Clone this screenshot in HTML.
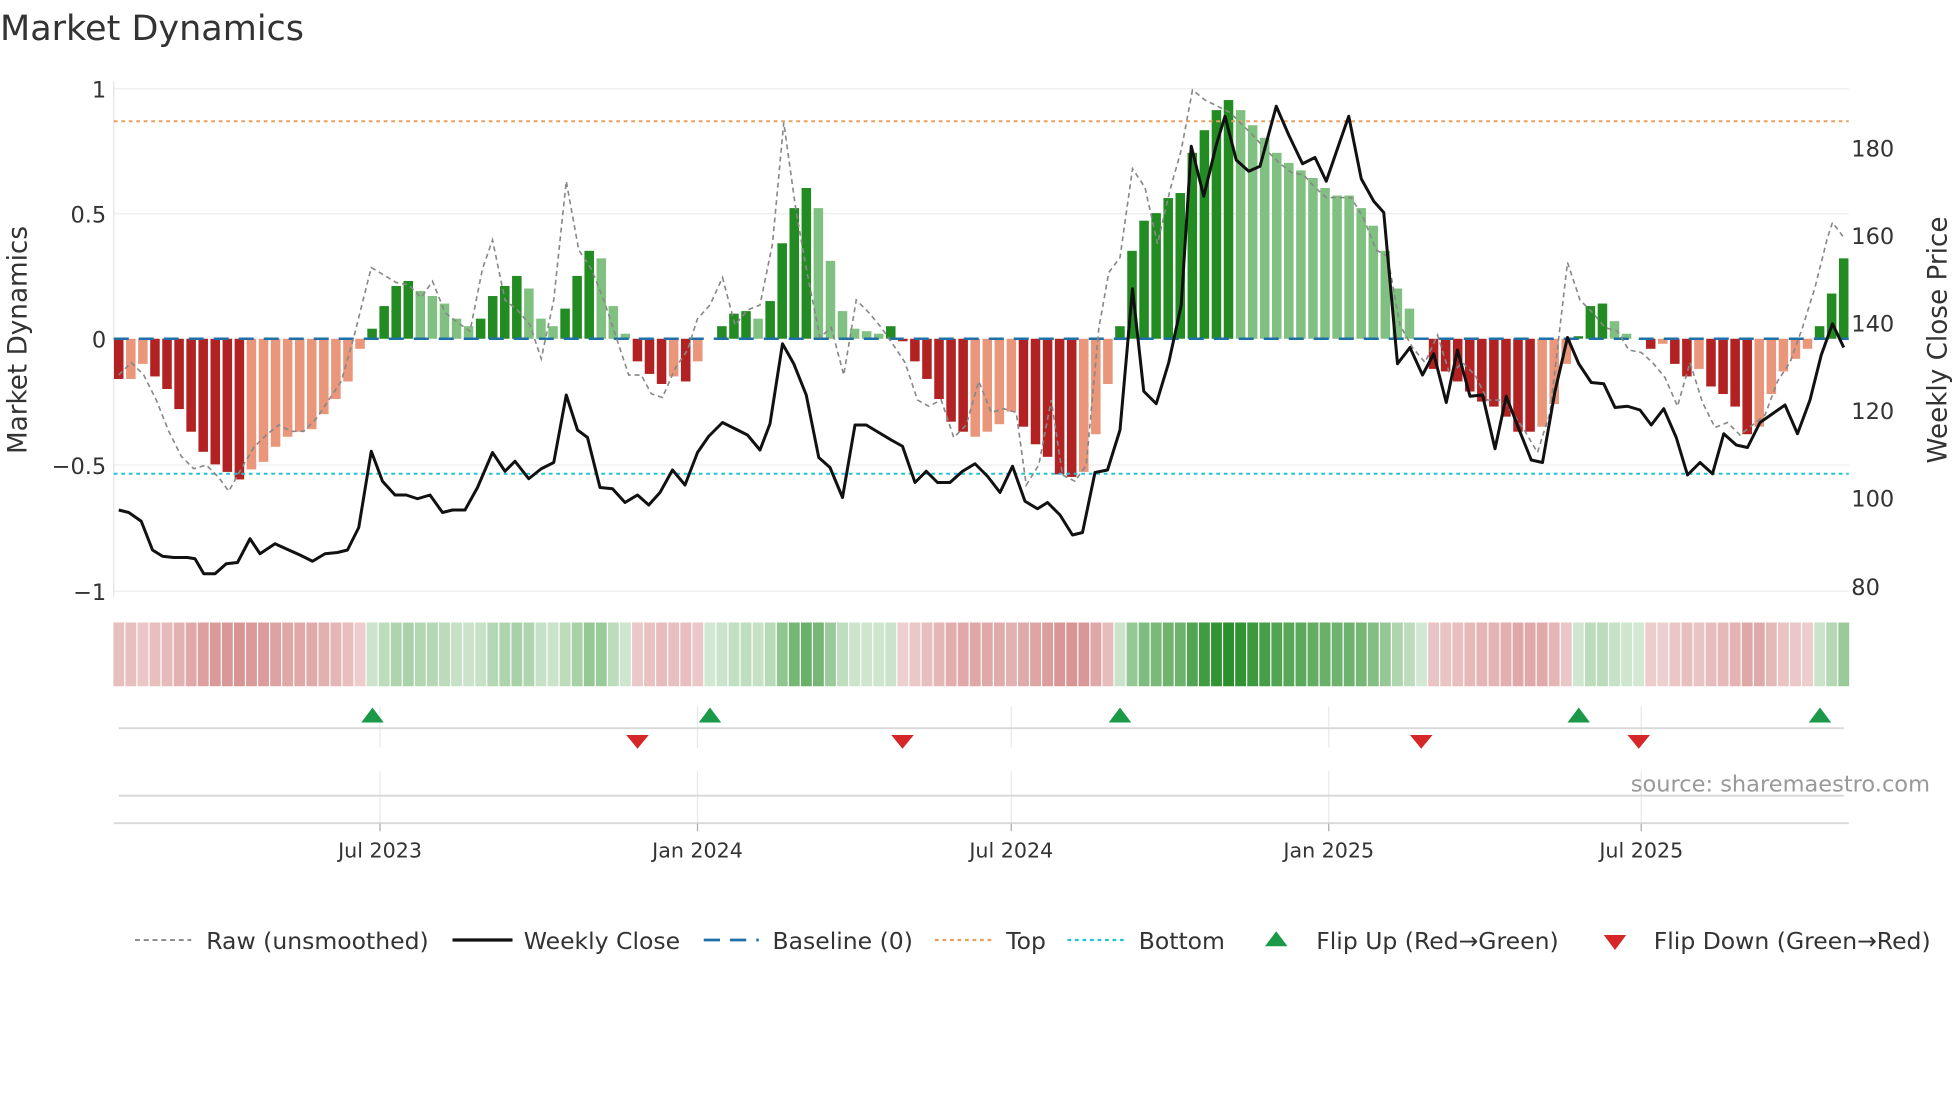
<!DOCTYPE html>
<html><head><meta charset="utf-8"><style>
html,body{margin:0;padding:0;background:#fff;}
svg{display:block;font-family:"DejaVu Sans","Liberation Sans",sans-serif;}
</style></head><body>
<svg width="1960" height="1102" viewBox="0 0 1568 881.6" xmlns="http://www.w3.org/2000/svg">
<rect width="1568" height="882" fill="#fff"/>
<text x="0" y="32" font-size="28" fill="#333">Market Dynamics</text>
<g stroke="#eeeeee" stroke-width="1">
<line x1="91" y1="71" x2="1479" y2="71"/><line x1="91" y1="171" x2="1479" y2="171"/>
<line x1="91" y1="372" x2="1479" y2="372"/><line x1="91" y1="473" x2="1479" y2="473"/>
</g>
<line x1="91" y1="65" x2="91" y2="478" stroke="#e4e4ea"/>

<!-- dark green bars -->
<g transform="translate(91.2,271) scale(9.65,-201)" fill="#228b22">
<rect x="21" width=".79" height=".04"/><rect x="22" width=".79" height=".13"/><rect x="23" width=".79" height=".21"/><rect x="24" width=".79" height=".23"/>
<rect x="30" width=".79" height=".08"/><rect x="31" width=".79" height=".17"/><rect x="32" width=".79" height=".21"/><rect x="33" width=".79" height=".25"/>
<rect x="37" width=".79" height=".12"/><rect x="38" width=".79" height=".25"/><rect x="39" width=".79" height=".35"/>
<rect x="50" width=".79" height=".05"/><rect x="51" width=".79" height=".10"/><rect x="52" width=".79" height=".11"/><rect x="54" width=".79" height=".15"/><rect x="55" width=".79" height=".38"/><rect x="56" width=".79" height=".52"/><rect x="57" width=".79" height=".60"/>
<rect x="64" width=".79" height=".05"/>
<rect x="83" width=".79" height=".05"/><rect x="84" width=".79" height=".35"/><rect x="85" width=".79" height=".47"/><rect x="86" width=".79" height=".50"/><rect x="87" width=".79" height=".56"/><rect x="88" width=".79" height=".58"/><rect x="89" width=".79" height=".74"/><rect x="90" width=".79" height=".83"/><rect x="91" width=".79" height=".91"/><rect x="92" width=".79" height=".95"/>
<rect x="121" width=".79" height=".01"/><rect x="122" width=".79" height=".13"/><rect x="123" width=".79" height=".14"/>
<rect x="141" width=".79" height=".05"/><rect x="142" width=".79" height=".18"/><rect x="143" width=".79" height=".32"/>
</g>
<!-- light green bars -->
<g transform="translate(91.2,271) scale(9.65,-201)" fill="#80c080">
<rect x="25" width=".79" height=".19"/><rect x="26" width=".79" height=".17"/><rect x="27" width=".79" height=".14"/><rect x="28" width=".79" height=".08"/><rect x="29" width=".79" height=".05"/>
<rect x="34" width=".79" height=".20"/><rect x="35" width=".79" height=".08"/><rect x="36" width=".79" height=".05"/>
<rect x="40" width=".79" height=".32"/><rect x="41" width=".79" height=".13"/><rect x="42" width=".79" height=".02"/>
<rect x="53" width=".79" height=".08"/><rect x="58" width=".79" height=".52"/><rect x="59" width=".79" height=".31"/><rect x="60" width=".79" height=".11"/><rect x="61" width=".79" height=".04"/><rect x="62" width=".79" height=".03"/><rect x="63" width=".79" height=".02"/>
<rect x="93" width=".79" height=".91"/><rect x="94" width=".79" height=".85"/><rect x="95" width=".79" height=".80"/><rect x="96" width=".79" height=".74"/><rect x="97" width=".79" height=".70"/><rect x="98" width=".79" height=".67"/><rect x="99" width=".79" height=".64"/><rect x="100" width=".79" height=".60"/><rect x="101" width=".79" height=".57"/><rect x="102" width=".79" height=".57"/><rect x="103" width=".79" height=".52"/><rect x="104" width=".79" height=".45"/><rect x="105" width=".79" height=".35"/><rect x="106" width=".79" height=".20"/><rect x="107" width=".79" height=".12"/>
<rect x="124" width=".79" height=".07"/><rect x="125" width=".79" height=".02"/>
</g>
<!-- dark red bars -->
<g transform="translate(91.2,271) scale(9.65,201)" fill="#b22222">
<rect x="0" width=".79" height=".16"/><rect x="3" width=".79" height=".15"/><rect x="4" width=".79" height=".20"/><rect x="5" width=".79" height=".28"/><rect x="6" width=".79" height=".37"/><rect x="7" width=".79" height=".45"/><rect x="8" width=".79" height=".50"/><rect x="9" width=".79" height=".53"/><rect x="10" width=".79" height=".56"/>
<rect x="43" width=".79" height=".09"/><rect x="44" width=".79" height=".14"/><rect x="45" width=".79" height=".18"/><rect x="47" width=".79" height=".17"/>
<rect x="65" width=".79" height=".01"/><rect x="66" width=".79" height=".09"/><rect x="67" width=".79" height=".16"/><rect x="68" width=".79" height=".24"/><rect x="69" width=".79" height=".33"/><rect x="70" width=".79" height=".37"/>
<rect x="75" width=".79" height=".35"/><rect x="76" width=".79" height=".42"/><rect x="77" width=".79" height=".47"/><rect x="78" width=".79" height=".54"/><rect x="79" width=".79" height=".55"/>
<rect x="109" width=".79" height=".12"/><rect x="110" width=".79" height=".13"/><rect x="111" width=".79" height=".17"/><rect x="112" width=".79" height=".21"/><rect x="113" width=".79" height=".25"/><rect x="114" width=".79" height=".27"/><rect x="115" width=".79" height=".31"/><rect x="116" width=".79" height=".37"/><rect x="117" width=".79" height=".37"/>
<rect x="127" width=".79" height=".04"/><rect x="129" width=".79" height=".10"/><rect x="130" width=".79" height=".15"/><rect x="132" width=".79" height=".19"/><rect x="133" width=".79" height=".22"/><rect x="134" width=".79" height=".27"/><rect x="135" width=".79" height=".38"/>
</g>
<!-- light red bars -->
<g transform="translate(91.2,271) scale(9.65,201)" fill="#e9967a">
<rect x="1" width=".79" height=".16"/><rect x="2" width=".79" height=".10"/>
<rect x="11" width=".79" height=".52"/><rect x="12" width=".79" height=".49"/><rect x="13" width=".79" height=".43"/><rect x="14" width=".79" height=".39"/><rect x="15" width=".79" height=".37"/><rect x="16" width=".79" height=".36"/><rect x="17" width=".79" height=".30"/><rect x="18" width=".79" height=".24"/><rect x="19" width=".79" height=".17"/><rect x="20" width=".79" height=".04"/>
<rect x="46" width=".79" height=".15"/><rect x="48" width=".79" height=".09"/>
<rect x="71" width=".79" height=".39"/><rect x="72" width=".79" height=".37"/><rect x="73" width=".79" height=".34"/><rect x="74" width=".79" height=".29"/>
<rect x="80" width=".79" height=".53"/><rect x="81" width=".79" height=".38"/><rect x="82" width=".79" height=".18"/>
<rect x="118" width=".79" height=".35"/><rect x="119" width=".79" height=".26"/><rect x="120" width=".79" height=".10"/>
<rect x="128" width=".79" height=".02"/><rect x="131" width=".79" height=".12"/><rect x="136" width=".79" height=".35"/><rect x="137" width=".79" height=".22"/><rect x="138" width=".79" height=".13"/><rect x="139" width=".79" height=".08"/><rect x="140" width=".79" height=".04"/>
</g>

<line x1="91" y1="97" x2="1479" y2="97" stroke="#e8a060" stroke-width="1.6" stroke-dasharray="3,3"/>
<line x1="91" y1="379" x2="1479" y2="379" stroke="#22c4d4" stroke-width="1.6" stroke-dasharray="3,3"/>
<line x1="91" y1="271" x2="1479" y2="271" stroke="#1f6fa8" stroke-width="2" stroke-dasharray="12,8"/>

<polyline fill="none" stroke="#888" stroke-width="1.3" stroke-dasharray="4,3" points="95,300 105,290 115,300 125,320 135,345 145,365 155,375 165,372 175,382 183,393 193,375 203,358 213,348 223,340 233,345 243,345 253,335 263,320 273,305 283,270 297,214 307,220 317,226 327,228 337,238 346,225 356,250 366,258 376,265 386,215 394,192 404,240 414,248 424,260 433,287 443,240 453,145 463,200 473,215 483,240 493,270 503,300 513,300 521,315 530,318 540,295 550,280 558,255 568,244 578,222 588,260 598,248 608,244 618,195 627,98 637,170 646,220 656,270 665,262 675,300 685,240 695,250 705,262 714,275 724,290 734,320 743,325 753,320 763,350 773,340 783,305 793,330 803,327 813,330 821,388 831,372 841,320 850,380 860,385 869,372 879,263 887,218 896,206 906,135 916,150 926,195 936,152 945,120 954,72 964,80 974,85 984,90 994,100 1004,110 1013,120 1023,130 1033,138 1043,140 1052,150 1061,158 1071,158 1081,158 1091,175 1101,200 1110,205 1120,260 1130,278 1140,290 1150,268 1160,300 1170,290 1180,300 1190,320 1200,320 1210,330 1220,345 1230,362 1240,330 1254,210 1264,240 1274,250 1284,262 1294,265 1303,280 1313,282 1322,290 1332,302 1342,325 1352,290 1362,322 1372,342 1382,338 1392,348 1402,340 1412,332 1422,305 1432,290 1442,262 1452,230 1462,190 1466,178 1475,190"/>
<polyline fill="none" stroke="#111" stroke-width="2.4" stroke-linejoin="round" points="95,408 103,410 113,417 122,440 130,445 139,446 150,446 156,447 163,459 172,459 181,451 190,450 200,431 208,443 220,435 231,440 240,444 250,449 260,443 270,442 278,440 287,422 297,361 306,385 316,396 325,396 334,399 344,396 354,410 362,408 372,408 382,390 394,362 404,377 412,369 423,383 433,375 443,370 453,316 462,344 470,350 480,390 490,391 500,402 510,396 519,404 528,394 538,376 548,388 558,362 567,349 578,338 588,343 598,348 608,360 616,339 626,275 635,291 645,316 655,366 664,374 674,398 684,340 693,340 703,346 713,352 722,357 732,386 741,377 750,386 760,386 770,377 780,371 790,381 800,394 810,373 820,401 830,407 838,402 848,412 858,428 866,426 876,378 886,376 896,344 906,231 915,313 925,323 935,290 945,244 953,117 963,157 973,116 980,93 989,128 999,137 1008,133 1021,85 1031,108 1042,131 1052,126 1061,145 1072,113 1079,93 1089,143 1099,161 1107,170 1118,291 1128,278 1138,300 1147,283 1157,322 1166,280 1176,317 1186,316 1196,359 1205,317 1215,343 1225,368 1234,370 1244,313 1254,270 1263,291 1273,306 1283,307 1292,326 1302,325 1312,328 1321,340 1331,327 1341,350 1350,380 1360,370 1370,379 1379,347 1389,356 1398,358 1408,338 1418,331 1428,324 1438,347 1448,320 1457,284 1466,259 1475,278"/>

<g font-size="18" fill="#333" text-anchor="end">
<text x="85" y="78">1</text><text x="85" y="178">0.5</text><text x="85" y="278">0</text>
<text x="85" y="379">−0.5</text><text x="85" y="480">−1</text>
</g>
<g font-size="18" fill="#333">
<text x="1481" y="125">180</text><text x="1481" y="195">160</text><text x="1481" y="265">140</text>
<text x="1481" y="335">120</text><text x="1481" y="405">100</text><text x="1481" y="476">80</text>
</g>
<text transform="translate(21,272) rotate(-90)" font-size="21" fill="#333" text-anchor="middle">Market Dynamics</text>
<text transform="translate(1557,272) rotate(-90)" font-size="21" fill="#333" text-anchor="middle">Weekly Close Price</text>

<!-- strip red -->
<g transform="translate(90.7,498) scale(9.65,1)" fill="#c86464">
<rect x="0" width=".9" height="51" fill-opacity=".41"/><rect x="1" width=".9" height="51" fill-opacity=".41"/><rect x="2" width=".9" height="51" fill-opacity=".37"/><rect x="3" width=".9" height="51" fill-opacity=".41"/><rect x="4" width=".9" height="51" fill-opacity=".44"/><rect x="5" width=".9" height="51" fill-opacity=".5"/><rect x="6" width=".9" height="51" fill-opacity=".56"/><rect x="7" width=".9" height="51" fill-opacity=".62"/><rect x="8" width=".9" height="51" fill-opacity=".65"/><rect x="9" width=".9" height="51" fill-opacity=".67"/><rect x="10" width=".9" height="51" fill-opacity=".69"/><rect x="11" width=".9" height="51" fill-opacity=".66"/><rect x="12" width=".9" height="51" fill-opacity=".64"/><rect x="13" width=".9" height="51" fill-opacity=".6"/><rect x="14" width=".9" height="51" fill-opacity=".57"/><rect x="15" width=".9" height="51" fill-opacity=".56"/><rect x="16" width=".9" height="51" fill-opacity=".55"/><rect x="17" width=".9" height="51" fill-opacity=".51"/><rect x="18" width=".9" height="51" fill-opacity=".47"/><rect x="19" width=".9" height="51" fill-opacity=".42"/><rect x="20" width=".9" height="51" fill-opacity=".33"/>
<rect x="43" width=".9" height="51" fill-opacity=".36"/><rect x="44" width=".9" height="51" fill-opacity=".4"/><rect x="45" width=".9" height="51" fill-opacity=".43"/><rect x="46" width=".9" height="51" fill-opacity=".41"/><rect x="47" width=".9" height="51" fill-opacity=".42"/><rect x="48" width=".9" height="51" fill-opacity=".36"/>
<rect x="65" width=".9" height="51" fill-opacity=".31"/><rect x="66" width=".9" height="51" fill-opacity=".36"/><rect x="67" width=".9" height="51" fill-opacity=".41"/><rect x="68" width=".9" height="51" fill-opacity=".47"/><rect x="69" width=".9" height="51" fill-opacity=".53"/><rect x="70" width=".9" height="51" fill-opacity=".56"/><rect x="71" width=".9" height="51" fill-opacity=".57"/><rect x="72" width=".9" height="51" fill-opacity=".56"/><rect x="73" width=".9" height="51" fill-opacity=".54"/><rect x="74" width=".9" height="51" fill-opacity=".5"/><rect x="75" width=".9" height="51" fill-opacity=".55"/><rect x="76" width=".9" height="51" fill-opacity=".59"/><rect x="77" width=".9" height="51" fill-opacity=".63"/><rect x="78" width=".9" height="51" fill-opacity=".68"/><rect x="79" width=".9" height="51" fill-opacity=".69"/><rect x="80" width=".9" height="51" fill-opacity=".67"/><rect x="81" width=".9" height="51" fill-opacity=".57"/><rect x="82" width=".9" height="51" fill-opacity=".43"/>
<rect x="109" width=".9" height="51" fill-opacity=".38"/><rect x="110" width=".9" height="51" fill-opacity=".39"/><rect x="111" width=".9" height="51" fill-opacity=".42"/><rect x="112" width=".9" height="51" fill-opacity=".45"/><rect x="113" width=".9" height="51" fill-opacity=".48"/><rect x="114" width=".9" height="51" fill-opacity=".49"/><rect x="115" width=".9" height="51" fill-opacity=".52"/><rect x="116" width=".9" height="51" fill-opacity=".56"/><rect x="117" width=".9" height="51" fill-opacity=".56"/><rect x="118" width=".9" height="51" fill-opacity=".55"/><rect x="119" width=".9" height="51" fill-opacity=".48"/><rect x="120" width=".9" height="51" fill-opacity=".37"/>
<rect x="127" width=".9" height="51" fill-opacity=".33"/><rect x="128" width=".9" height="51" fill-opacity=".31"/><rect x="129" width=".9" height="51" fill-opacity=".37"/><rect x="130" width=".9" height="51" fill-opacity=".41"/><rect x="131" width=".9" height="51" fill-opacity=".38"/><rect x="132" width=".9" height="51" fill-opacity=".43"/><rect x="133" width=".9" height="51" fill-opacity=".45"/><rect x="134" width=".9" height="51" fill-opacity=".49"/><rect x="135" width=".9" height="51" fill-opacity=".57"/><rect x="136" width=".9" height="51" fill-opacity=".55"/><rect x="137" width=".9" height="51" fill-opacity=".45"/><rect x="138" width=".9" height="51" fill-opacity=".39"/><rect x="139" width=".9" height="51" fill-opacity=".36"/><rect x="140" width=".9" height="51" fill-opacity=".33"/>
</g>
<!-- strip green -->
<g transform="translate(90.7,498) scale(9.65,1)" fill="#228b22">
<rect x="21" width=".9" height="51" fill-opacity=".23"/><rect x="22" width=".9" height="51" fill-opacity=".3"/><rect x="23" width=".9" height="51" fill-opacity=".37"/><rect x="24" width=".9" height="51" fill-opacity=".38"/><rect x="25" width=".9" height="51" fill-opacity=".35"/><rect x="26" width=".9" height="51" fill-opacity=".34"/><rect x="27" width=".9" height="51" fill-opacity=".31"/><rect x="28" width=".9" height="51" fill-opacity=".26"/><rect x="29" width=".9" height="51" fill-opacity=".24"/><rect x="30" width=".9" height="51" fill-opacity=".26"/><rect x="31" width=".9" height="51" fill-opacity=".34"/><rect x="32" width=".9" height="51" fill-opacity=".37"/><rect x="33" width=".9" height="51" fill-opacity=".4"/><rect x="34" width=".9" height="51" fill-opacity=".36"/><rect x="35" width=".9" height="51" fill-opacity=".26"/><rect x="36" width=".9" height="51" fill-opacity=".24"/><rect x="37" width=".9" height="51" fill-opacity=".3"/><rect x="38" width=".9" height="51" fill-opacity=".4"/><rect x="39" width=".9" height="51" fill-opacity=".48"/><rect x="40" width=".9" height="51" fill-opacity=".46"/><rect x="41" width=".9" height="51" fill-opacity=".3"/><rect x="42" width=".9" height="51" fill-opacity=".22"/>
<rect x="49" width=".9" height="51" fill-opacity=".2"/><rect x="50" width=".9" height="51" fill-opacity=".24"/><rect x="51" width=".9" height="51" fill-opacity=".28"/><rect x="52" width=".9" height="51" fill-opacity=".29"/><rect x="53" width=".9" height="51" fill-opacity=".26"/><rect x="54" width=".9" height="51" fill-opacity=".32"/><rect x="55" width=".9" height="51" fill-opacity=".5"/><rect x="56" width=".9" height="51" fill-opacity=".62"/><rect x="57" width=".9" height="51" fill-opacity=".68"/><rect x="58" width=".9" height="51" fill-opacity=".62"/><rect x="59" width=".9" height="51" fill-opacity=".45"/><rect x="60" width=".9" height="51" fill-opacity=".29"/><rect x="61" width=".9" height="51" fill-opacity=".23"/><rect x="62" width=".9" height="51" fill-opacity=".22"/><rect x="63" width=".9" height="51" fill-opacity=".22"/><rect x="64" width=".9" height="51" fill-opacity=".24"/>
<rect x="83" width=".9" height="51" fill-opacity=".24"/><rect x="84" width=".9" height="51" fill-opacity=".48"/><rect x="85" width=".9" height="51" fill-opacity=".58"/><rect x="86" width=".9" height="51" fill-opacity=".6"/><rect x="87" width=".9" height="51" fill-opacity=".65"/><rect x="88" width=".9" height="51" fill-opacity=".66"/><rect x="89" width=".9" height="51" fill-opacity=".79"/><rect x="90" width=".9" height="51" fill-opacity=".86"/><rect x="91" width=".9" height="51" fill-opacity=".93"/><rect x="92" width=".9" height="51" fill-opacity=".96"/><rect x="93" width=".9" height="51" fill-opacity=".93"/><rect x="94" width=".9" height="51" fill-opacity=".88"/><rect x="95" width=".9" height="51" fill-opacity=".84"/><rect x="96" width=".9" height="51" fill-opacity=".79"/><rect x="97" width=".9" height="51" fill-opacity=".76"/><rect x="98" width=".9" height="51" fill-opacity=".74"/><rect x="99" width=".9" height="51" fill-opacity=".71"/><rect x="100" width=".9" height="51" fill-opacity=".68"/><rect x="101" width=".9" height="51" fill-opacity=".66"/><rect x="102" width=".9" height="51" fill-opacity=".66"/><rect x="103" width=".9" height="51" fill-opacity=".62"/><rect x="104" width=".9" height="51" fill-opacity=".56"/><rect x="105" width=".9" height="51" fill-opacity=".48"/><rect x="106" width=".9" height="51" fill-opacity=".36"/><rect x="107" width=".9" height="51" fill-opacity=".3"/><rect x="108" width=".9" height="51" fill-opacity=".2"/>
<rect x="121" width=".9" height="51" fill-opacity=".21"/><rect x="122" width=".9" height="51" fill-opacity=".3"/><rect x="123" width=".9" height="51" fill-opacity=".31"/><rect x="124" width=".9" height="51" fill-opacity=".26"/><rect x="125" width=".9" height="51" fill-opacity=".22"/><rect x="126" width=".9" height="51" fill-opacity=".2"/>
<rect x="141" width=".9" height="51" fill-opacity=".24"/><rect x="142" width=".9" height="51" fill-opacity=".34"/><rect x="143" width=".9" height="51" fill-opacity=".46"/>
</g>

<g stroke="#e8e8ee" stroke-width="1">
<line x1="304" y1="565" x2="304" y2="598"/><line x1="558" y1="565" x2="558" y2="598"/><line x1="809" y1="565" x2="809" y2="598"/><line x1="1063" y1="565" x2="1063" y2="598"/><line x1="1313" y1="565" x2="1313" y2="598"/>
<line x1="304" y1="617" x2="304" y2="658"/><line x1="558" y1="617" x2="558" y2="658"/><line x1="809" y1="617" x2="809" y2="658"/><line x1="1063" y1="617" x2="1063" y2="658"/><line x1="1313" y1="617" x2="1313" y2="658"/>
</g>
<line x1="95" y1="582.5" x2="1475" y2="582.5" stroke="#d8d8d8" stroke-width="1.5"/>
<line x1="95" y1="636.5" x2="1475" y2="636.5" stroke="#d8d8d8" stroke-width="1.5"/>
<line x1="91" y1="658.5" x2="1479" y2="658.5" stroke="#d8d8d8" stroke-width="1.5"/>
<g stroke="#aaa"><line x1="304" y1="659" x2="304" y2="665"/><line x1="558" y1="659" x2="558" y2="665"/><line x1="809" y1="659" x2="809" y2="665"/><line x1="1063" y1="659" x2="1063" y2="665"/><line x1="1313" y1="659" x2="1313" y2="665"/></g>

<g fill="#1a9a48">
<polygon points="289,578 307,578 298,566"/><polygon points="559,578 577,578 568,566"/><polygon points="887,578 905,578 896,566"/><polygon points="1254,578 1272,578 1263,566"/><polygon points="1447,578 1465,578 1456,566"/>
</g>
<g fill="#d62728">
<polygon points="501,588 519,588 510,599"/><polygon points="713,588 731,588 722,599"/><polygon points="1128,588 1146,588 1137,599"/><polygon points="1302,588 1320,588 1311,599"/>
</g>

<text x="1544" y="633" font-size="18" fill="#999" text-anchor="end">source: sharemaestro.com</text>
<g font-size="16.5" fill="#333" text-anchor="middle">
<text x="304" y="686">Jul 2023</text><text x="558" y="686">Jan 2024</text><text x="809" y="686">Jul 2024</text><text x="1063" y="686">Jan 2025</text><text x="1313" y="686">Jul 2025</text>
</g>
<g font-size="18.8" fill="#333">
<line x1="108" y1="752" x2="153" y2="752" stroke="#888" stroke-width="1.5" stroke-dasharray="4,3"/>
<text x="165" y="759">Raw (unsmoothed)</text>
<line x1="362" y1="752" x2="410" y2="752" stroke="#111" stroke-width="2.6"/>
<text x="419" y="759">Weekly Close</text>
<line x1="563" y1="752" x2="607" y2="752" stroke="#1f6fa8" stroke-width="2.2" stroke-dasharray="13,8"/>
<text x="618" y="759">Baseline (0)</text>
<line x1="748" y1="752" x2="793" y2="752" stroke="#e8a060" stroke-width="1.8" stroke-dasharray="3,3"/>
<text x="805" y="759">Top</text>
<line x1="854" y1="752" x2="899" y2="752" stroke="#22c4d4" stroke-width="1.8" stroke-dasharray="3,3"/>
<text x="911" y="759">Bottom</text>
<polygon points="1012,757 1030,757 1021,745" fill="#1a9a48"/>
<text x="1053" y="759">Flip Up (Red→Green)</text>
<polygon points="1283,748 1301,748 1292,760" fill="#d62728"/>
<text x="1323" y="759">Flip Down (Green→Red)</text>
</g>
</svg>
</body></html>
